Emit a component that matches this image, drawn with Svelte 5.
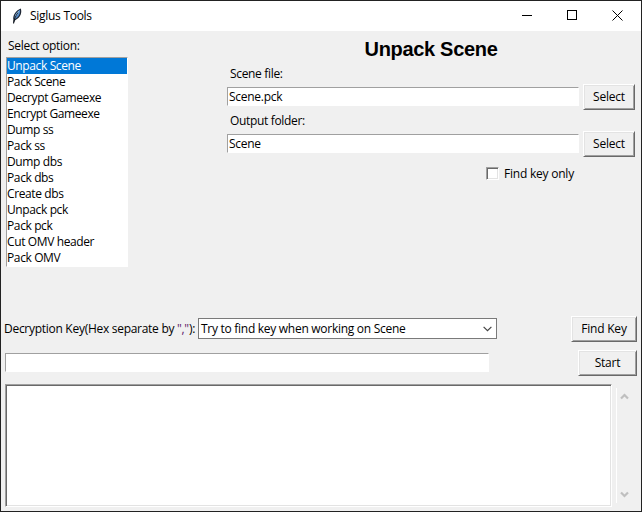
<script>
  const options = ['Unpack Scene', 'Pack Scene', 'Decrypt Gameexe', 'Encrypt Gameexe', 'Dump ss', 'Pack ss', 'Dump dbs', 'Pack dbs', 'Create dbs', 'Unpack pck', 'Pack pck', 'Cut OMV header', 'Pack OMV'];
  let selected = $state(0);
  let sceneFile = $state('Scene.pck');
  let outputFolder = $state('Scene');
  let keyOnly = $state(false);
</script>

<div class="window">
  <header>
    <svg class="feather" width="16" height="16" viewBox="0 0 16 16">
      <path d="M4.200 15 4.400 11.800C3.500 8 6.500 2.500 11.800.5c1.300 3.500.2 9-5.600 11.700L4.800 15z" fill="#1c2430" />
      <path d="M5.500 10.500C5.300 7.500 7.800 3.500 11 1.800c.5 3.200-.8 7.200-4.900 9.200z" fill="#4f87c7" />
      <path d="M5.800 9.500C6 7 7.800 4 10.300 2.700 9.500 5.500 8 7.500 5.800 9.500z" fill="#a8cdf0" />
      <path d="M4.600 15.600C5 11.500 6.500 8 9 4.500" fill="none" stroke="#10151c" stroke-width=".9" />
    </svg>
    <span class="caption">Siglus Tools</span>
    <svg class="controls" width="121" height="30" viewBox="0 0 121 30" fill="none" stroke="#000" shape-rendering="crispEdges">
      <path d="M2 14.500h10M47.500 9.500h9v9h-9z" />
      <path d="M92.500 9.500l10 10M102.500 9.500l-10 10" shape-rendering="auto" />
    </svg>
  </header>

  <main>
    <div class="upper">
      <section class="side">
        <div class="label">Select option:</div>
        <ul>
          {#each options as option, i}
            <li class:active={i === selected}><button onclick={() => (selected = i)}>{option}</button></li>
          {/each}
        </ul>
      </section>

      <section class="form">
        <h1>Unpack Scene</h1>
        <div class="label field">Scene file:</div>
        <div class="row">
          <input class="entry" bind:value={sceneFile} />
          <button class="btn">Select</button>
        </div>
        <div class="label field second">Output folder:</div>
        <div class="row">
          <input class="entry" bind:value={outputFolder} />
          <button class="btn">Select</button>
        </div>
        <label class="check"><input type="checkbox" bind:checked={keyOnly} /><span>Find key only</span></label>
      </section>
    </div>

    <div class="keyrow">
      <span class="keylabel">Decryption Key(Hex separate by <i>","</i>):</span>
      <div class="combo">
        <span>Try to find key when working on Scene</span>
        <svg width="9" height="6" viewBox="0 0 9 6"><path d="M.6.8 4.500 4.700 8.400.8" fill="none" stroke="#444" stroke-width="1.200" /></svg>
      </div>
      <button class="btn find">Find Key</button>
    </div>

    <div class="startrow">
      <input class="entry keyentry" />
      <button class="btn start">Start</button>
    </div>

    <div class="logrow">
      <div class="log"></div>
      <div class="scroll">
        <svg width="9" height="7" viewBox="0 0 9 7"><path d="M1 5.500 4.500 2 8 5.500" fill="none" stroke="#bfbfbf" stroke-width="2.200" /></svg>
        <svg width="9" height="7" viewBox="0 0 9 7"><path d="M1 1.500 4.500 5 8 1.500" fill="none" stroke="#bfbfbf" stroke-width="2.200" /></svg>
      </div>
    </div>
  </main>
</div>

<style>
  .window, .window * { box-sizing: border-box; }
  .window {
    width: 642px; height: 512px; border: 1px solid #222; background: #f0f0f0; color: #000;
    font: 12px/16px "Open Sans", "Noto Sans", sans-serif; letter-spacing: -0.28px; overflow: hidden; white-space: nowrap;
  }
  button, input { font: inherit; letter-spacing: inherit; color: inherit; margin: 0; padding: 0; border: 0; border-radius: 0; outline: 0; }
  header { display: flex; align-items: center; height: 30px; background: #fff; }
  .feather { margin-left: 8px; }
  .caption { margin-left: 5px; }
  .controls { margin-left: auto; }
  .upper { display: flex; height: 285px; }
  .side { width: 122px; margin-left: 5px; padding-top: 7px; }
  .side .label { padding-left: 2px; height: 19px; letter-spacing: -0.3px; }
  ul { list-style: none; margin: 0; padding: 0; height: 210px; background: #fff; border: 1px solid; border-color: #a0a0a0 #fff #fff #a0a0a0; letter-spacing: -0.38px; }
  li { height: 16px; display: flex; }
  li button { width: 100%; height: 16px; text-align: left; background: none; line-height: 16px; }
  li.active { background: #0078d7; color: #fff; }
  .form { width: 408px; margin-left: 99px; }
  h1 { margin: 0; height: 35px; padding-top: 6px; font: bold 20px/24px "Liberation Sans", Arial, sans-serif; text-align: center; letter-spacing: -0.32px; }
  .field { padding-left: 3px; height: 18px; letter-spacing: -0.33px; }
  .second { height: 21px; padding-top: 3px; }
  .row { display: flex; align-items: flex-start; justify-content: space-between; height: 26px; }
  .row .entry { width: 352px; margin-top: 3px; }
  .entry { height: 19px; background: #fff; border: 1px solid; border-color: #a0a0a0 #fff #fff #a0a0a0; padding-left: 1px; }
  .btn { width: 52px; height: 26px; background: #f0f0f0; border: 1px solid; border-color: #fff #696969 #696969 #fff; box-shadow: inset 1px 1px #e3e3e3, inset -1px -1px #a0a0a0; text-align: center; letter-spacing: -0.22px; }
  .check { display: flex; align-items: center; height: 13px; margin: 10px 0 0 259px; letter-spacing: -0.22px; }
  .check input { appearance: none; width: 13px; height: 13px; background: #fff; border: 1px solid; border-color: #a0a0a0 #fff #fff #a0a0a0; box-shadow: inset 1px 1px #696969, inset -1px -1px #e3e3e3; }
  .check span { margin-left: 5px; }
  .keyrow { display: flex; align-items: flex-start; height: 26px; padding: 0 4px 0 3px; }
  .keylabel { width: 194px; padding-top: 5px; }
  .keylabel i { font-style: normal; color: #5c1d6b; }
  .combo { width: 299px; height: 21px; margin-top: 2px; border: 1px solid #7a7a7a; background: #fff; display: flex; align-items: center; justify-content: space-between; padding: 0 4px 0 2px; }
  .find { width: 66px; margin-left: auto; }
  .startrow { display: flex; justify-content: space-between; padding: 0 4px; margin-top: 8px; height: 26px; }
  .keyentry { width: 484px; margin-top: 3px; }
  .start { width: 59px; }
  .logrow { display: flex; margin: 8px 0 0 4px; }
  .log { width: 607px; height: 123px; background: #fff; border: 1px solid; border-color: #a0a0a0 #fff #fff #a0a0a0; box-shadow: inset 1px 1px #696969, inset -1px -1px #e3e3e3; }
  .scroll { margin: 4px 0 0 4px; width: 17px; height: 115px; border-left: 1px solid #fff; display: flex; flex-direction: column; justify-content: space-between; padding: 5px 0 5px 3px; }
</style>
